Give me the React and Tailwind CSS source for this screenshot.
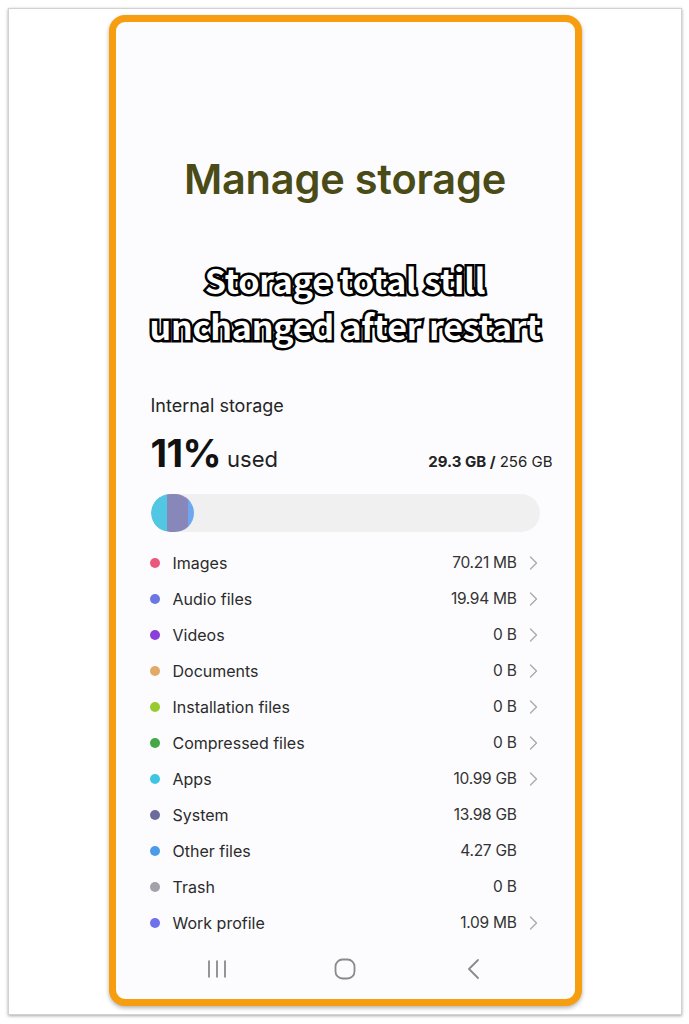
import React from "react";

const rows = [
  { label: "Images", value: "70.21 MB", color: "bg-[#e9597c]", chev: true },
  { label: "Audio files", value: "19.94 MB", color: "bg-[#6b78e2]", chev: true },
  { label: "Videos", value: "0 B", color: "bg-[#8a40d8]", chev: true },
  { label: "Documents", value: "0 B", color: "bg-[#e2aa68]", chev: true },
  { label: "Installation files", value: "0 B", color: "bg-[#98cc2c]", chev: true },
  { label: "Compressed files", value: "0 B", color: "bg-[#43a845]", chev: true },
  { label: "Apps", value: "10.99 GB", color: "bg-[#3fc5e2]", chev: true },
  { label: "System", value: "13.98 GB", color: "bg-[#6c6c9c]", chev: false },
  { label: "Other files", value: "4.27 GB", color: "bg-[#4b9be9]", chev: false },
  { label: "Trash", value: "0 B", color: "bg-[#a2a2aa]", chev: false },
  { label: "Work profile", value: "1.09 MB", color: "bg-[#6f70ec]", chev: true },
];

function Chevron() {
  return (
    <svg width="9" height="14" viewBox="0 0 9 14" fill="none">
      <path d="M1.5 1 L7.5 7 L1.5 13" stroke="#a8a8ad" strokeWidth="1.3" strokeLinecap="round" strokeLinejoin="round" />
    </svg>
  );
}

export default function App() {
  return (
    <div className="w-[689px] h-[1024px] bg-white p-2 font-['Inter','Noto_Sans',sans-serif]">
      <div className="w-[674px] h-[1007px] bg-white border border-[#d2d2d2] shadow-[0_1px_3px_rgba(0,0,0,0.35)] flex justify-center pt-[6px]">
        <div className="w-[473px] h-[991px] border-[7px] border-[#f69d10] rounded-[16px] bg-[#fcfcfe] shadow-[0_2px_4px_rgba(0,0,0,0.3)] flex flex-col">
          <div className="pt-[132px] text-center text-[41.5px] leading-[50px] font-semibold text-[#4a4b16] tracking-[-0.2px]">
            Manage storage
          </div>
          <div className="mt-[53px] text-center text-[34px] leading-[46px] font-bold text-white font-['Noto_Sans_CJK_SC','Noto_Sans',sans-serif] [paint-order:stroke_fill] [-webkit-text-stroke:5px_#000] tracking-[-0.2px]">
            <div>Storage total still</div>
            <div>unchanged after restart</div>
          </div>
          <div className="pl-[35px] pr-[22px]">
            <div className="mt-[45px] text-[18px] leading-[24px] text-[#252525]">Internal storage</div>
            <div className="mt-[13px] flex items-baseline justify-between leading-[44px]">
              <div className="flex items-baseline">
                <span className="text-[38.5px] font-bold text-[#111] tracking-[-0.6px]">11%</span>
                <span className="ml-[6px] text-[22px] text-[#222]">used</span>
              </div>
              <div className="text-[15px] text-[#222]">
                <span className="font-bold">29.3 GB /</span> 256 GB
              </div>
            </div>
            <div className="mt-[10px] w-[389px] h-[38px] rounded-full bg-[#f0f0f1] flex overflow-hidden">
              <div className="flex h-full w-[43px] rounded-full overflow-hidden">
                <div className="w-[16px] bg-[#52c7e4]" />
                <div className="w-[21px] bg-[#8887b9]" />
                <div className="w-[6px] bg-[#6ea6ef]" />
              </div>
            </div>
            <div className="mt-[13px] pr-[15px]">
              {rows.map((r) => (
                <div key={r.label} className="h-[36px] flex items-center">
                  <div className={`w-[10px] h-[10px] rounded-full ${r.color} ml-[-1px]`} />
                  <div className="ml-[13px] text-[16px] text-[#2b2b2b] flex-1">{r.label}</div>
                  <div className="text-[15.5px] text-[#333] tracking-[-0.3px]">{r.value}</div>
                  <div className="w-[21px] flex justify-end items-center pr-[0px]">{r.chev ? <Chevron /> : null}</div>
                </div>
              ))}
            </div>
          </div>
          <div className="mt-[8px] h-[40px] flex items-center pl-[37px]">
            <div className="w-[128px] flex justify-center">
              <svg width="20" height="20" viewBox="0 0 20 20" fill="none">
                <path d="M2 1.5 V18.5 M10 1.5 V18.5 M18 1.5 V18.5" stroke="#8a8a8e" strokeWidth="1.8" />
              </svg>
            </div>
            <div className="w-[128px] flex justify-center">
              <svg width="22" height="22" viewBox="0 0 22 22" fill="none">
                <rect x="1.5" y="1.5" width="19" height="19" rx="7" stroke="#8a8a8e" strokeWidth="1.8" />
              </svg>
            </div>
            <div className="w-[128px] flex justify-center">
              <svg width="14" height="22" viewBox="0 0 14 22" fill="none">
                <path d="M12 2 L3 11 L12 20" stroke="#8a8a8e" strokeWidth="1.8" strokeLinecap="round" strokeLinejoin="round" />
              </svg>
            </div>
          </div>
        </div>
      </div>
    </div>
  );
}
